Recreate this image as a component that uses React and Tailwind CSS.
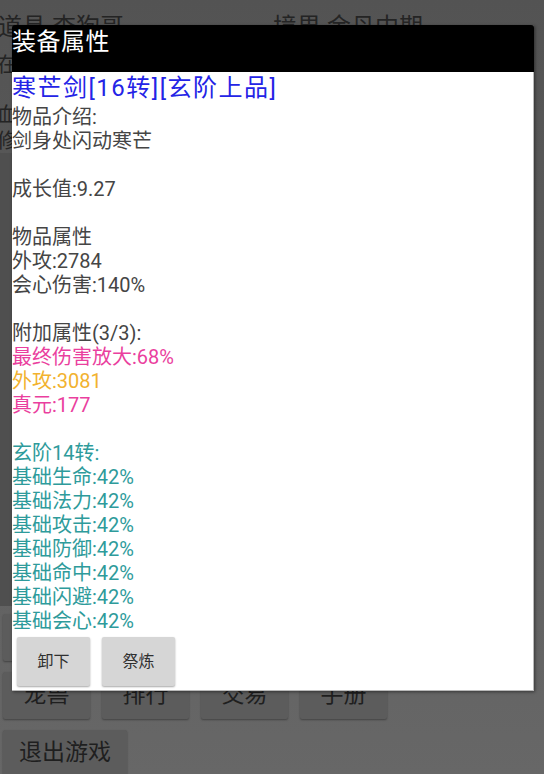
import React from 'react';

/* ── Equipment data ──────────────────────────────────────────── */
const LINES = [
  { text: '物品介绍:', tone: 'gray' },
  { text: '剑身处闪动寒芒', tone: 'gray' },
  { text: '' },
  { text: '成长值:9.27', tone: 'gray' },
  { text: '' },
  { text: '物品属性', tone: 'gray' },
  { text: '外攻:2784', tone: 'gray' },
  { text: '会心伤害:140%', tone: 'gray' },
  { text: '' },
  { text: '附加属性(3/3):', tone: 'gray' },
  { text: '最终伤害放大:68%', tone: 'pink' },
  { text: '外攻:3081', tone: 'gold' },
  { text: '真元:177', tone: 'pink' },
  { text: '' },
  { text: '玄阶14转:', tone: 'teal' },
  { text: '基础生命:42%', tone: 'teal' },
  { text: '基础法力:42%', tone: 'teal' },
  { text: '基础攻击:42%', tone: 'teal' },
  { text: '基础防御:42%', tone: 'teal' },
  { text: '基础命中:42%', tone: 'teal' },
  { text: '基础闪避:42%', tone: 'teal' },
  { text: '基础会心:42%', tone: 'teal' },
];

const TONES = {
  gray: 'text-[#454545]',
  pink: 'text-[#ea3f9e]',
  gold: 'text-[#f2b22f]',
  teal: 'text-[#2e9b9b]',
};

const FONT = "font-['Roboto','Noto_Sans_CJK_SC',sans-serif]";

/* ── Dimmed game screen behind the dialog ───────────────────── */
const BgButton = ({ label, w = 'w-[87px]' }) => (
  <div className={`${w} h-[47px] rounded-[2px] bg-[#5c5c5c] shadow-[0_1px_2px_rgba(0,0,0,0.35)] flex items-center justify-center text-[23px] text-[#1f1f1f]`}>
    {label}
  </div>
);

const GameScreen = () => (
  <div className="h-full flex flex-col">
    <div className="flex pt-[15px] text-[24px] leading-[24px] text-[#242424]">
      <span className="w-[275px] -ml-[2px]">道具 查狗哥</span>
      <span>境界 金丹中期</span>
    </div>
    <div className="flex flex-col text-[20px] leading-[20px] text-[#242424] -ml-[3px]">
      <span className="mt-[16px]">在线</span>
      <span className="mt-[30px]">血量</span>
      <span className="mt-[6px]">修为</span>
    </div>
    <div className="flex-1 w-[12px] mt-[2px] mb-[8px] bg-[#4f4f4f]" />
    <div className="flex flex-col gap-[11px] pl-[3px]">
      <div className="flex gap-[12px]">
        <BgButton label="背包" />
        <BgButton label="技能" />
        <BgButton label="任务" />
        <BgButton label="地图" />
      </div>
      <div className="flex gap-[12px]">
        <BgButton label="宠兽" />
        <BgButton label="排行" />
        <BgButton label="交易" />
        <BgButton label="手册" />
      </div>
      <div className="flex -mb-[3px]">
        <BgButton label="退出游戏" w="w-[124px]" />
      </div>
    </div>
  </div>
);

/* ── Equipment dialog ───────────────────────────────────────── */
const EquipDialog = () => (
  <div className="absolute left-[12px] top-[25px] w-[522px] shadow-[1px_1px_3px_rgba(0,0,0,0.45)]">
    <div className="h-[47px] bg-black rounded-t-[3px] text-white text-[24px] tracking-[0.5px] leading-[34px]">
      装备属性
    </div>
    <div className="bg-white border-r border-b border-[#b9b9b9]">
      <div className="h-[33px] leading-[33px] text-[24px] tracking-[1.5px] text-[#2424e6]">
        寒芒剑[16转][玄阶上品]
      </div>
      {LINES.map((l, i) =>
        l.text ? (
          <div key={i} className={`h-[24px] leading-[24px] text-[20px] ${TONES[l.tone]}`}>{l.text}</div>
        ) : (
          <div key={i} className="h-[24px]" />
        )
      )}
      <div className="flex gap-[12px] pl-[5px] pt-[4px] pb-[4px]">
        {['卸下', '祭炼'].map(b => (
          <div key={b}
            className="w-[73px] h-[49px] rounded-[2px] bg-[#d6d6d6] shadow-[0_1px_2px_rgba(0,0,0,0.35)] flex items-center justify-center text-[16px] text-[#303030]">
            {b}
          </div>
        ))}
      </div>
    </div>
  </div>
);

export default function App() {
  return (
    <div className={`relative w-[544px] h-[774px] overflow-hidden bg-linear-to-b from-[#535353] to-[#676767] ${FONT}`}>
      <GameScreen />
      <EquipDialog />
    </div>
  );
}
